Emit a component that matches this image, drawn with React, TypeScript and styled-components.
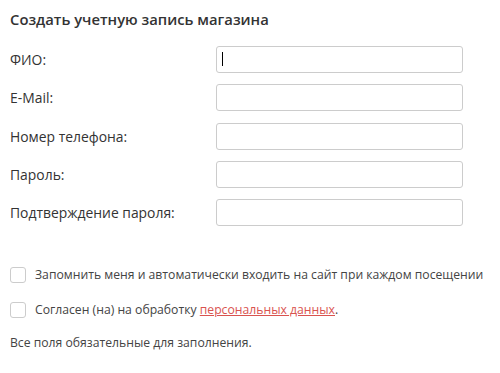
import React from "react";
import styled, { createGlobalStyle } from "styled-components";

const Global = createGlobalStyle`
  html, body { margin: 0; padding: 0; background: #fff; }
  body { font-family: "Open Sans", "Noto Sans", sans-serif; color: #333; }
`;

const Page = styled.div`
  padding: 10px 0 0 10px;
`;

const Title = styled.h2`
  margin: 0;
  font-size: 14.8px;
  font-weight: 600;
  line-height: 19px;
  color: #333;
`;

const Fields = styled.div`
  display: grid;
  grid-template-columns: 206px 247px;
  row-gap: 11.3px;
  margin-top: 17px;
  align-items: center;
`;

const Label = styled.label`
  font-size: 13.9px;
  color: #333;
`;

const Input = styled.input`
  display: block;
  box-sizing: border-box;
  height: 27px;
  width: 247px;
  border: 1px solid #ccc;
  border-radius: 3px;
  padding: 0 5px;
  font-family: inherit;
  font-size: 13px;
  outline: none;
`;

const Checks = styled.div`
  display: flex;
  flex-direction: column;
  gap: 19px;
  margin-top: 41px;
`;

const CheckRow = styled.label`
  display: flex;
  align-items: center;
  gap: 9px;
  font-size: 12.2px;
  color: #444;
  line-height: 16px;
  white-space: nowrap;
`;

const Box = styled.span`
  box-sizing: border-box;
  width: 16px;
  height: 16px;
  border: 1px solid #ccc;
  border-radius: 3px;
  background: #fff;
  flex: none;
`;

const Link = styled.a`
  color: #d9534f;
  text-decoration: underline;
`;

const Note = styled.p`
  margin: 16px 0 0;
  font-size: 12.2px;
  color: #444;
`;

const Caret = styled.span`
  position: absolute;
  left: 6px;
  top: 6px;
  width: 1px;
  height: 14px;
  background: #000;
`;

const InputWrap = styled.div`
  position: relative;
`;

const fields = ["ФИО:", "E-Mail:", "Номер телефона:", "Пароль:", "Подтверждение пароля:"];

export default function App() {
  return (
    <Page>
      <Global />
      <Title>Создать учетную запись магазина</Title>
      <Fields>
        {fields.map((f, i) => (
          <React.Fragment key={f}>
            <Label>{f}</Label>
            <InputWrap>
              <Input type={i >= 3 ? "password" : "text"} />
              {i === 0 && <Caret />}
            </InputWrap>
          </React.Fragment>
        ))}
      </Fields>
      <Checks>
        <CheckRow>
          <Box />
          Запомнить меня и автоматически входить на сайт при каждом посещении
        </CheckRow>
        <CheckRow>
          <Box />
          <span>
            Согласен (на) на обработку <Link href="#">персональных данных</Link>.
          </span>
        </CheckRow>
      </Checks>
      <Note>Все поля обязательные для заполнения.</Note>
    </Page>
  );
}
